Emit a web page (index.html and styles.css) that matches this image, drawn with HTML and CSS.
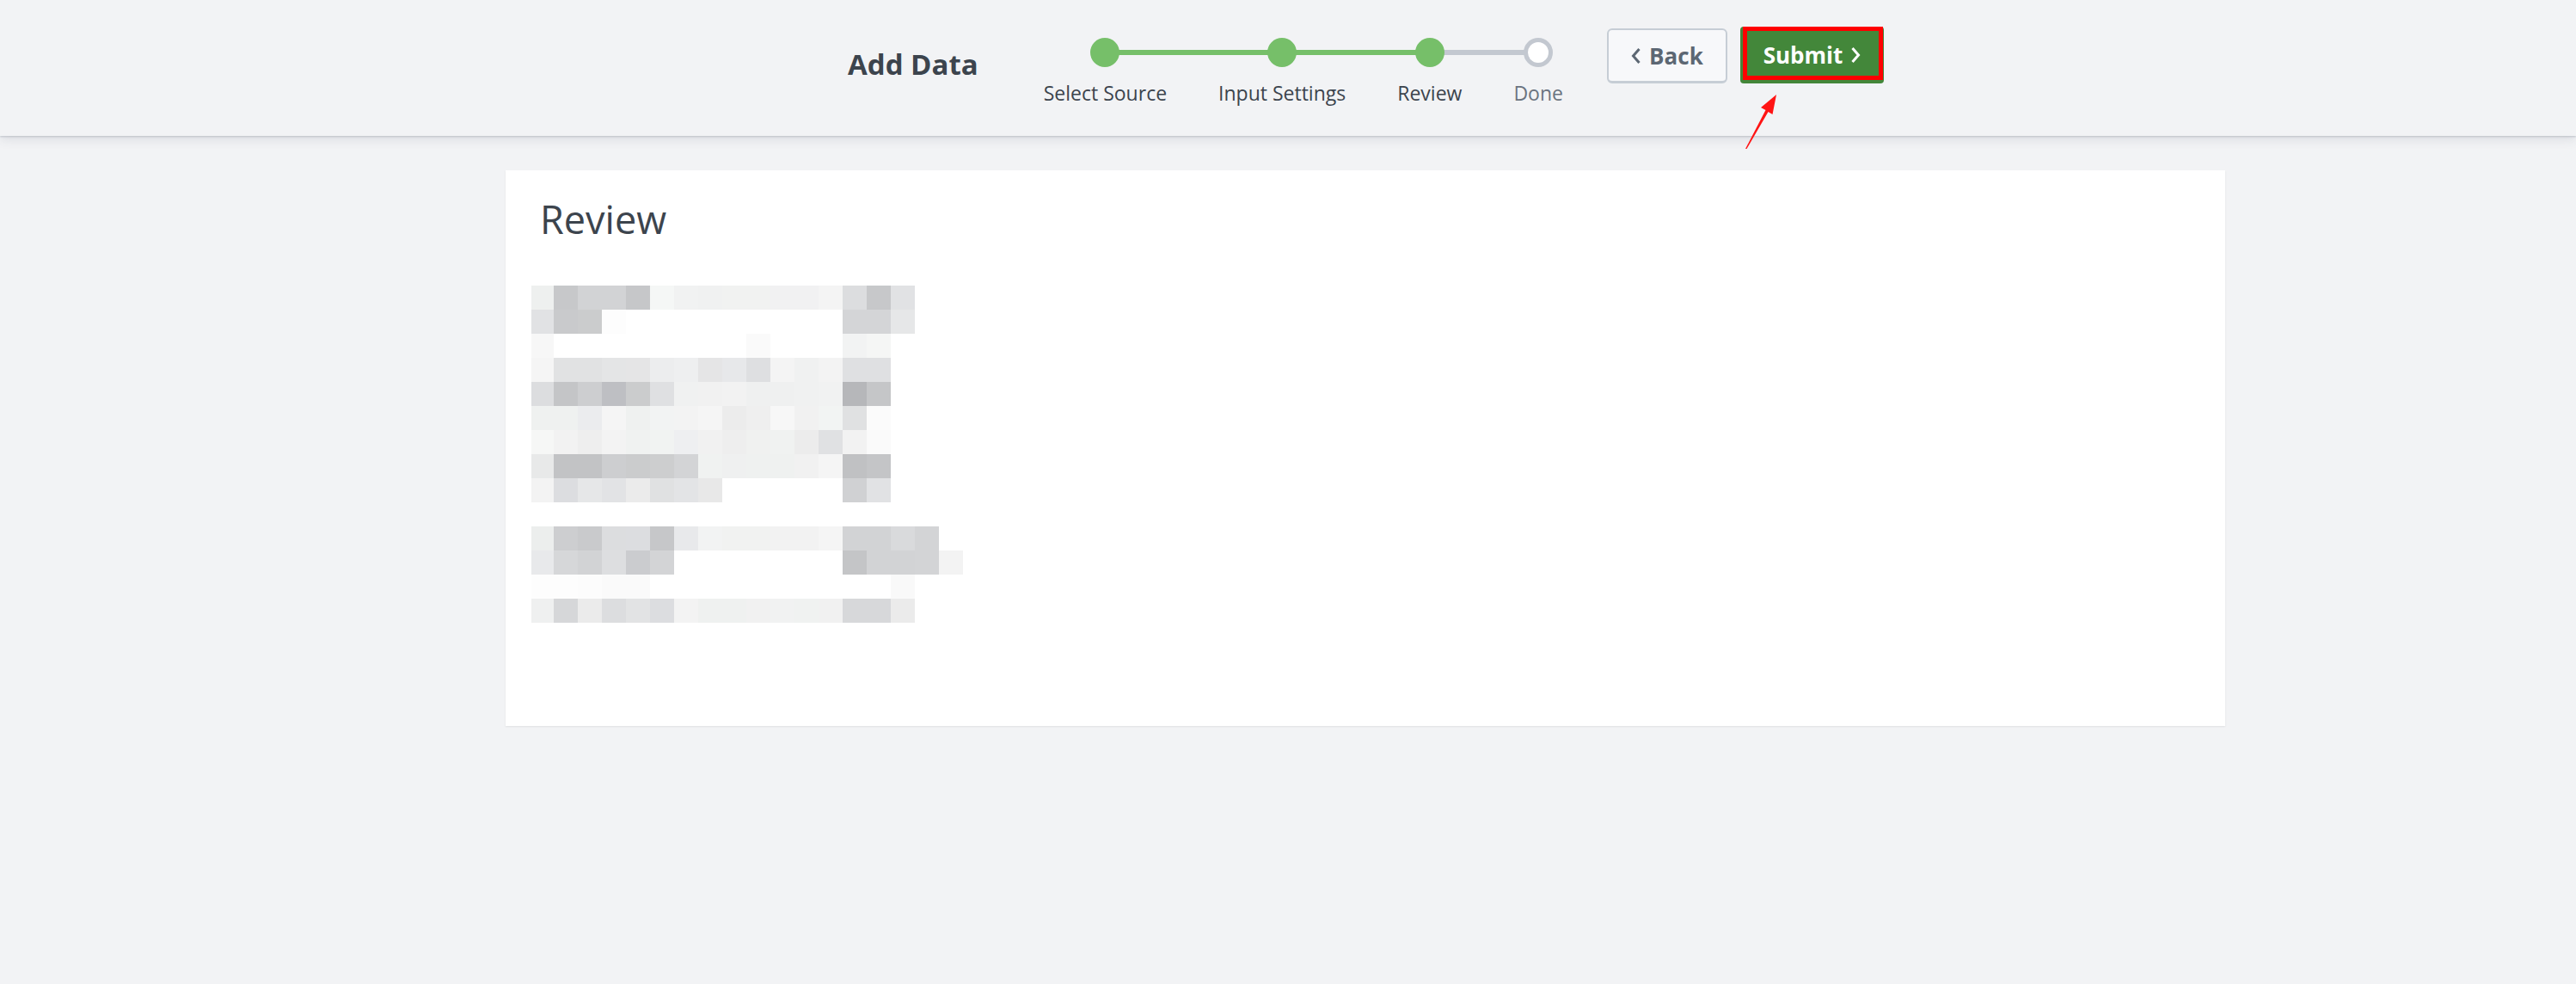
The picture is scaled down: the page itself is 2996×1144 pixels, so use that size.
FILE: index.html
```html
<!DOCTYPE html>
<html lang="en">
<head>
  <meta charset="UTF-8" />
  <meta name="viewport" content="width=device-width, initial-scale=1.0"/>
  <title>Add Data - Review</title>
  <link rel="stylesheet" href="styles.css">
</head>
<body>
  <header class="topbar">
    <div class="topbar-inner">
      <h1 class="page-title">Add Data</h1>

      <ol class="stepper">
        <li class="step is-complete"><span class="step-dot"></span><span class="step-label">Select Source</span></li>
        <li class="step is-complete"><span class="step-dot"></span><span class="step-label">Input Settings</span></li>
        <li class="step is-complete is-current"><span class="step-dot"></span><span class="step-label">Review</span></li>
        <li class="step"><span class="step-dot"></span><span class="step-label">Done</span></li>
      </ol>

      <div class="actions">
        <button class="btn btn-back">
          <svg class="chevron" viewBox="0 0 12 20" width="12" height="20"><path d="M9.5 2 L2.5 10 L9.5 18"/></svg>
          Back
        </button>
        <button class="btn btn-submit">
          Submit
          <svg class="chevron" viewBox="0 0 12 20" width="12" height="20"><path d="M2.5 2 L9.5 10 L2.5 18"/></svg>
          <span class="callout-box"></span>
        </button>
      </div>
    </div>
  </header>

  <!-- annotation arrow pointing at Submit -->
  <svg class="callout-arrow" viewBox="0 0 56 80" width="56" height="80">
    <polygon points="10,73 11.5,73 36.5,30 41.5,33 46,10 28,25 33.5,28"/>
  </svg>

  <main class="content">
    <section class="card">
      <h2 class="card-title">Review</h2>
      <div class="mosaic" id="mosaic"></div>
    </section>
  </main>

  <script src="script.js"></script>
</body>
</html>
```

FILE: styles.css
```css
body {
  margin: 0;
  min-height: 100vh;
  position: relative;
  background-color: #f2f3f5;
  color: #3c444d;
  font-family: "Open Sans", "Liberation Sans", sans-serif;
}

.topbar {
  position: relative;
  z-index: 1;
  height: 158px;
  background-color: #f2f3f5;
  box-shadow: 0 1px 2px rgba(60, 68, 90, 0.22), 0 4px 12px rgba(60, 68, 90, 0.12);
}

.topbar-inner {
  display: flex;
  align-items: flex-start;
  padding-left: 986px;
}

.page-title {
  margin: 55px 0 0;
  font-size: 33px;
  line-height: 40px;
  font-weight: 700;
  white-space: nowrap;
}

/* stepper */
.stepper {
  list-style: none;
  display: flex;
  margin: 44px 0 0 46px;
  padding: 0;
}

.step {
  position: relative;
  display: flex;
  flex-direction: column;
  align-items: center;
  padding: 0 30px;
}

.step::before,
.step::after {
  content: "";
  position: absolute;
  top: 14px;
  width: 50%;
  height: 6px;
  background-color: #c3c8d0;
}

.step::before { left: 0; }
.step::after { right: 0; }

.step:first-child::before,
.step:last-child::after {
  display: none;
}

.step.is-complete::before,
.step.is-complete::after {
  background-color: #76bf69;
}

.step.is-current::after {
  background-color: #c3c8d0;
}

.step-dot {
  position: relative;
  z-index: 1;
  width: 34px;
  height: 34px;
  box-sizing: border-box;
  border-radius: 50%;
  background-color: #fff;
  border: 5px solid #c3c8d0;
}

.step.is-complete .step-dot {
  background-color: #76bf69;
  border: none;
}

.step-label {
  margin-top: 15px;
  font-size: 23px;
  line-height: 30px;
  white-space: nowrap;
}

.step:not(.is-complete) .step-label {
  color: #6b7480;
}

/* buttons */
.actions {
  display: flex;
  align-items: flex-start;
  gap: 15px;
  margin: 33px 0 0 21px;
}

.btn {
  display: inline-flex;
  align-items: center;
  justify-content: center;
  gap: 9px;
  height: 64px;
  padding: 0;
  box-sizing: border-box;
  border-radius: 6px;
  font-family: "Open Sans", "Liberation Sans", sans-serif;
  font-size: 26px;
  font-weight: 700;
  cursor: pointer;
}

.chevron path {
  fill: none;
  stroke: currentColor;
  stroke-width: 3;
}

.btn-back {
  width: 140px;
  background-color: #f7f8fa;
  border: 2px solid #c6cdd5;
  border-bottom-width: 3px;
  color: #5c6773;
}

.btn-submit {
  position: relative;
  width: 167px;
  height: 66px;
  margin-top: -2px;
  background-color: #43873a;
  border: none;
  border-radius: 4px;
  color: #fff;
}

.callout-box {
  position: absolute;
  top: 0;
  left: 3px;
  right: 1px;
  bottom: 4px;
  border: 5px solid #ff0000;
}

.callout-arrow {
  position: absolute;
  left: 2020px;
  top: 100px;
  z-index: 2;
  fill: #ff1414;
}

/* review card */
.content {
  padding: 40px 0 0 588px;
}

.card {
  width: 2000px;
  height: 646px;
  box-sizing: border-box;
  padding: 31px 40px;
  background-color: #fff;
  box-shadow: 0 1px 2px rgba(0, 0, 0, 0.08);
}

.card-title {
  margin: 0;
  font-size: 45px;
  line-height: 52px;
  font-weight: 400;
}

.mosaic {
  display: grid;
  grid-template-columns: 26px repeat(17, 28px);
  grid-auto-rows: 28px;
  margin: 51px 0 0 -10px;
}
```

FILE: script.js
```js
// blurred preview of the settings summary, one colour per block
var rows = [
  ["eef0ef","c7c8ca","d2d3d5","d2d3d5","c6c7c9","f5f7f6","f1f2f2","f0f1f1","f1f2f1","f1f2f1","f1f1f2","f1f1f2","f4f4f4","dcdddf","c7c8ca","e1e2e4"],
  ["e1e2e4","c9cacc","cbcccd","fdfdfd","","","","","","","","","","d4d5d7","d4d5d7","e6e7e8"],
  ["f7f7f7","","","","","","","","","fafafa","","","","f2f3f3","f5f6f5"],
  ["f5f5f5","e1e2e3","e1e2e3","e4e5e6","e5e5e6","ecedee","eeeff0","e5e5e6","e7e8ea","dedfe1","f4f4f4","f0f1f1","f3f3f3","dfe0e2","dfe0e2"],
  ["dcdddf","c4c5c7","cdced0","bebfc3","cbcccd","dfe0e2","f0f1f1","f1f1f1","f2f2f2","eff0f0","eff0f0","f0f1f1","f1f2f2","b6b7ba","c5c6c8"],
  ["eff1f0","eff1f0","ebecee","f5f5f5","eff1f0","f2f3f3","f3f3f3","f5f5f5","ececec","efefef","f7f7f7","f1f1f1","f2f4f3","e0e1e2","fbfbfb"],
  ["f6f7f6","f2f2f2","eeeeee","f3f3f3","f0f2f1","f1f3f2","eeeff1","f1f1f1","eeeeee","f0f1f0","f0f2f1","ececec","e0e1e3","f2f2f2","fafafa"],
  ["e8e9e9","c2c3c5","c2c3c5","cdced0","cbcccd","cdcecf","d3d4d6","f0f2f1","eff0f0","eff1f0","eff1f0","f1f1f1","f5f5f5","c0c1c3","c4c5c7"],
  ["f3f3f3","dcdde0","e6e7e8","e2e3e5","ebebeb","e0e1e2","e3e4e6","e8e8e8","","","","","","d0d1d3","e1e2e4"],
  [],
  ["eceeed","cdced0","c9cacc","dcdddf","dcdde0","c6c7c9","e8e9eb","f2f3f3","f1f2f1","f1f2f1","f2f2f2","f2f2f2","f5f5f5","d2d3d5","d2d3d5","d9dadc","d3d4d6"],
  ["e8e9eb","d6d7d9","d2d3d5","dddee0","cbcccf","d3d4d6","","","","","","","","c4c5c7","d2d3d5","d2d3d5","d3d4d6","f3f3f3"],
  ["fdfdfd","fdfdfd","fcfcfc","fafafa","fafafa","","","","","","","","","","","f9f9f9"],
  ["eff0f0","d6d7d9","ebebeb","dcdddf","e2e3e4","dcdde0","f3f3f3","eff1f0","eff1f0","f1f1f1","f1f2f2","f0f2f1","f1f1f1","d7d8da","d7d8da","ebebeb"]
];

var mosaic = document.getElementById("mosaic");

rows.forEach(function (row) {
  for (var i = 0; i < 18; i++) {
    var cell = document.createElement("span");
    if (row[i]) {
      cell.style.backgroundColor = "#" + row[i];
    }
    mosaic.appendChild(cell);
  }
});
```
